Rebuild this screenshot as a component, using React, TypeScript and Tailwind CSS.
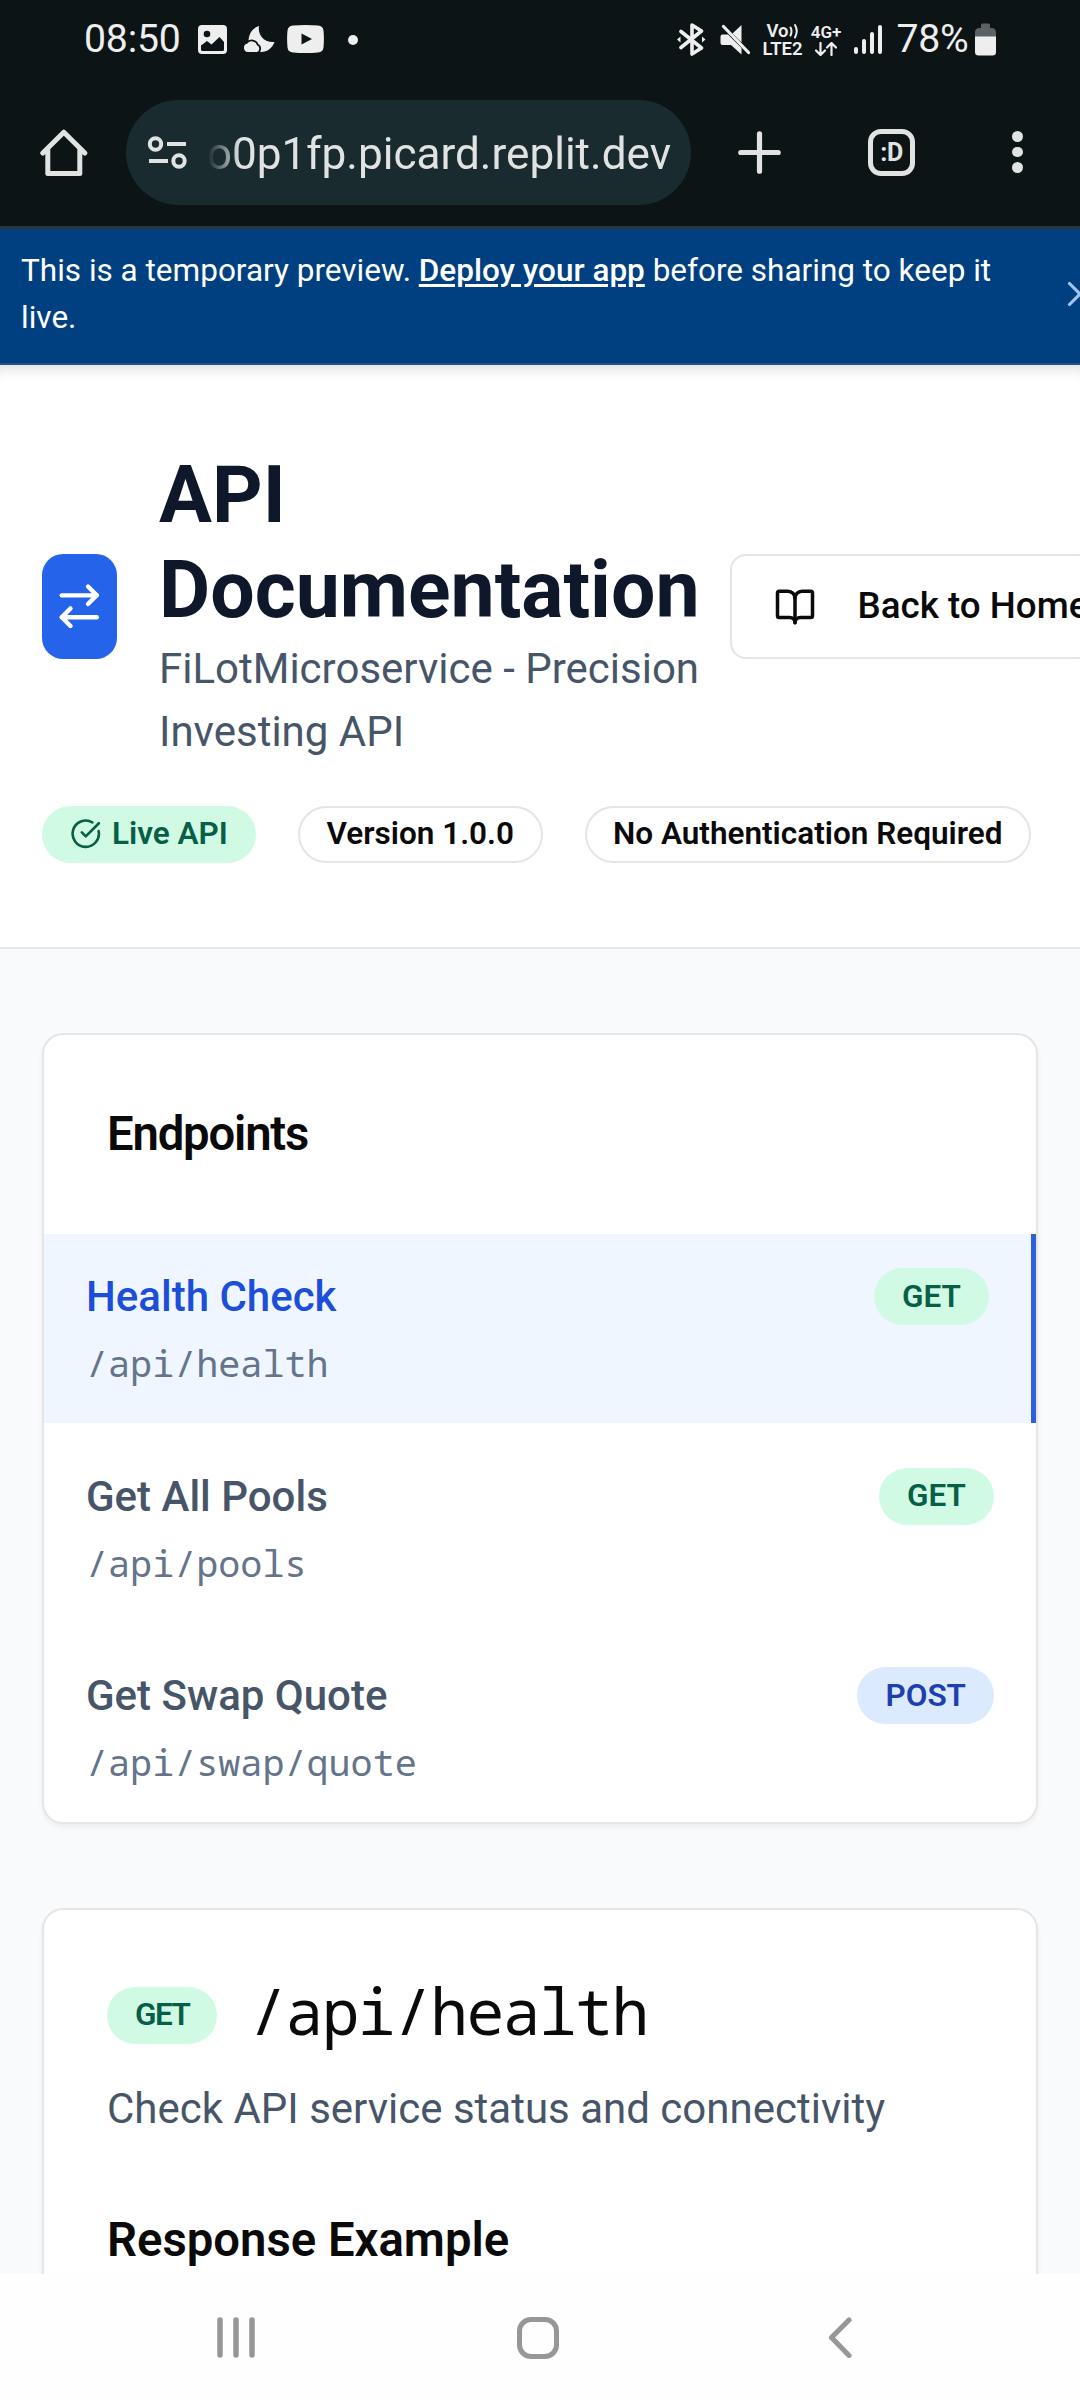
import { ArrowRightLeft, BookOpen, CircleCheckBig, X } from "lucide-react";

type Method = "GET" | "POST";

const endpoints: { name: string; path: string; method: Method; active?: boolean }[] = [
  { name: "Health Check", path: "/api/health", method: "GET", active: true },
  { name: "Get All Pools", path: "/api/pools", method: "GET" },
  { name: "Get Swap Quote", path: "/api/swap/quote", method: "POST" },
];

function StatusBar() {
  return (
    <div className="flex h-[78px] items-center pl-[84px] text-[#eeeeee]">
      <span className="mt-[1px] w-[114px] text-[39.2px] leading-none tracking-[-0.2px]">08:50</span>
      {/* picture notification */}
      <svg className="h-[29px] w-[29px]" viewBox="0 0 29 29">
        <rect width="29" height="29" rx="4" fill="#eee" />
        <circle cx="9" cy="9" r="3.3" fill="#0c1416" />
        <path d="M3 20.5 9 16l4.500 3.500L21.500 12l4.500 5v7.500q0 1.500-1.500 1.500h-20Q3 26 3 24.500Z" fill="#0c1416" />
      </svg>
      {/* moon behind a cloud */}
      <svg className="ml-[17px] h-[28px] w-[31px]" viewBox="0 0 31 28">
        <path d="M15 1C13.500 10 20 18 30.500 17 28 23.500 23 27.500 16 27L4.500 17C4.500 9 8.500 3 15 1Z" fill="#eee" />
        <path d="M4 27a4.300 4.300 0 0 1-.6-8.500 5.500 5.500 0 0 1 9.600 1.800A3.600 3.600 0 0 1 13 27Z" fill="#eee" stroke="#0c1416" strokeWidth="3.600" />
        <path d="M4 27a4.300 4.300 0 0 1-.6-8.500 5.500 5.500 0 0 1 9.600 1.800A3.600 3.600 0 0 1 13 27Z" fill="#eee" />
      </svg>
      <svg className="ml-[12px] h-[28px] w-[37px]" viewBox="0 0 37 28">
        <path d="M6 .6q12.500-1 25 0 5 .4 5.500 5 .8 8.400 0 16.800-.5 4.600-5.500 5-12.500 1-25 0-5-.4-5.500-5-.8-8.400 0-16.800Q1 1 6 .6Z" fill="#eee" />
        <path d="M14.500 8.500v11L25 14Z" fill="#0c1416" />
      </svg>
      <span className="ml-[24px] mt-[2px] h-[10px] w-[10px] rounded-full bg-[#eeeeee]" />

      <svg className="ml-[319px] h-[33px] w-[29px]" viewBox="0 0 29 33" fill="none" stroke="#eee">
        <path d="M4 8.500 24.500 25 15 31V2l9.500 6L4 24.500" strokeWidth="3.600" strokeLinecap="round" strokeLinejoin="round" />
        <path d="M0 16.500 3.500 13.500v6ZM28.500 16.500 25 13.500v6Z" fill="#eee" stroke="none" />
      </svg>
      <svg className="ml-[14px] h-[31px] w-[30px]" viewBox="0 0 30 31">
        <path d="M12.500 9.500 21.500 1v17.500Z" fill="#eee" />
        <path d="M2.500 10.500H8L21.500 24v6.500L11 21H2.500q-2 0-2-2v-6.500q0-2 2-2Z" fill="#eee" />
        <path d="m3.500 2.500 25 26" stroke="#eee" strokeWidth="3.200" strokeLinecap="round" />
      </svg>
      <span className="ml-[12px] mt-[2px] flex w-[41px] flex-col items-center text-[18.500px] font-semibold leading-[18px]">
        <span className="flex items-center">
          Vo
          <svg className="h-[16px] w-[10px]" viewBox="0 0 10 16" fill="none" stroke="#eee" strokeWidth="2" strokeLinecap="round">
            <path d="M1.500 4.500q2 3.500 0 8M6 2q3.500 6 0 12.500" />
          </svg>
        </span>
        <span>LTE2</span>
      </span>
      <span className="ml-[7px] mt-[2px] flex w-[32px] flex-col items-center text-[17px] font-semibold leading-[15px]">
        <span>4G+</span>
        <svg className="mt-[2px] h-[14px] w-[22px]" viewBox="0 0 22 14" fill="none" stroke="#eee" strokeWidth="2.200" strokeLinecap="round" strokeLinejoin="round">
          <path d="M5.500 1v12M1 8.500 5.500 13 10 8.500M16.500 13V1M12 5.500 16.500 1 21 5.500" />
        </svg>
      </span>
      <span className="ml-[12px] flex h-[30px] items-end gap-[4.500px]">
        <span className="h-[7px] w-[3.500px] rounded-full bg-[#eeeeee]" />
        <span className="h-[15px] w-[3.500px] rounded-full bg-[#eeeeee]" />
        <span className="h-[22px] w-[3.500px] rounded-full bg-[#eeeeee]" />
        <span className="h-[29px] w-[3.500px] rounded-full bg-[#eeeeee]" />
      </span>
      <span className="ml-[15px] mt-[1px] w-[78px] text-[39.200px] leading-none tracking-[-0.3px]">78%</span>
      <svg className="mt-[1px] h-[33px] w-[21px]" viewBox="0 0 21 33">
        <path d="M6 5V2q0-1.500 1.500-1.500h6Q15 .5 15 2v3h1.500Q21 5 21 9.500V14H0V9.500Q0 5 4.500 5Z" fill="#5c6163" />
        <path d="M0 13.500h21v15.500q0 3.500-3.500 3.500h-14Q0 32.500 0 29Z" fill="#eee" />
      </svg>
    </div>
  );
}

function BrowserToolbar() {
  return (
    <div className="flex h-[148px] items-center pl-[40px] text-[#e1e3e3]">
      <svg className="h-[49px] w-[48px]" viewBox="0 0 48 49" fill="none" stroke="#e1e3e3" strokeWidth="5" strokeLinecap="round" strokeLinejoin="round">
        <path d="M2.800 25 23.800 4.200 44.800 25M7.800 22v23.500h32V22" />
      </svg>
      <div className="ml-[38px] flex h-[105px] w-[565px] items-center rounded-full bg-[#1a2b2f] pl-[21px] pr-[20px]">
        <svg className="h-[35px] w-[41px] shrink-0" viewBox="0 0 41 35" fill="none" stroke="#e1e3e3" strokeWidth="4">
          <circle cx="8.500" cy="9" r="5.700" />
          <circle cx="32" cy="26" r="5.700" />
          <path d="M20 9h19M2 26h19" />
        </svg>
        <div className="ml-[20px] flex min-w-0 flex-1 justify-end overflow-hidden whitespace-nowrap pt-[4px] text-[44.100px] leading-[56px] [mask-image:linear-gradient(to_right,transparent,black_32px)]">
          o0p1fp.picard.replit.dev
        </div>
      </div>
      <svg className="ml-[47px] h-[43px] w-[43px]" viewBox="0 0 43 43" stroke="#e1e3e3" strokeWidth="5.200" strokeLinecap="round">
        <path d="M21.500 2.800v37.400M2.800 21.500h37.400" />
      </svg>
      <div className="ml-[87px] flex h-[47px] w-[47px] items-center justify-center rounded-[13px] border-[5px] border-[#e1e3e3] text-[25px] font-bold leading-none tracking-[-0.5px]">
        :D
      </div>
      <div className="ml-[97px] flex flex-col gap-[5px]">
        <span className="h-[10.700px] w-[10.700px] rounded-full bg-[#e1e3e3]" />
        <span className="h-[10.700px] w-[10.700px] rounded-full bg-[#e1e3e3]" />
        <span className="h-[10.700px] w-[10.700px] rounded-full bg-[#e1e3e3]" />
      </div>
    </div>
  );
}

function PreviewBanner() {
  return (
    <div className="flex h-[139px] items-center overflow-hidden border-b-2 border-t-[3px] border-b-[#25508a] border-t-[#2b383b] bg-[#004080] pl-[21px] text-white">
      <p className="mt-[-4px] w-[1030px] shrink-0 text-[31.500px] leading-[47px]">
        This is a temporary preview.{" "}
        <a className="font-medium underline decoration-[3px] underline-offset-[3px]">Deploy your app</a> before
        sharing to keep it live.
      </p>
      <X className="mb-[5px] ml-[8px] h-[42px] w-[42px] shrink-0 text-[#a3c4ee]" strokeWidth={1.8} />
    </div>
  );
}

function MethodBadge({ method }: { method: Method }) {
  const color = method === "GET" ? "bg-[#d1fae5] text-[#065f46]" : "bg-[#dbeafe] text-[#1e40af]";
  return (
    <span className={`flex h-[57px] items-center rounded-full px-[28px] text-[31.500px] font-semibold leading-[42px] ${color}`}>
      {method}
    </span>
  );
}

function PageHeader() {
  return (
    <header className="h-[584px] overflow-hidden border-b-2 border-[#e2e8f0] bg-white px-[42px] pt-[83px] shadow-[inset_0_14px_14px_-10px_rgba(0,0,0,0.13)]">
      <div className="flex items-center">
        <div className="mt-[2px] flex h-[105px] w-[75px] shrink-0 items-center justify-center rounded-[21px] bg-[#2563eb]">
          <ArrowRightLeft className="h-[52.500px] w-[52.500px] shrink-0 text-white" strokeWidth={2} />
        </div>
        <div className="ml-[42px] w-[541px] shrink-0">
          <h1 className="text-[78.750px] font-bold leading-[94.500px] text-[#0f172a]">API Documentation</h1>
          <p className="text-[42px] leading-[63px] text-[#475569]">FiLotMicroservice - Precision Investing API</p>
        </div>
        <button className="ml-[30px] mt-[2px] flex h-[105px] shrink-0 items-center gap-[41.500px] rounded-[16px] border-2 border-[#e5e5e5] bg-white px-[42px] text-[36.750px] font-medium leading-[52.500px] text-[#0a0a0a]">
          <BookOpen className="h-[42px] w-[42px]" />
          <span className="whitespace-nowrap">Back to Home</span>
        </button>
      </div>
      <div className="mt-[43px] flex gap-[42px] whitespace-nowrap text-[31.500px] font-semibold leading-[42px] text-[#0a0a0a]">
        <span className="flex h-[57px] items-center rounded-full bg-[#d1fae5] px-[28px] pb-[1px] text-[#065f46]">
          <CircleCheckBig className="mr-[10.500px] h-[31.500px] w-[31.500px]" />
          Live API
        </span>
        <span className="flex h-[57px] items-center rounded-full border-2 border-[#e5e5e5] px-[26.600px] pb-[1px]">
          Version 1.0.0
        </span>
        <span className="flex h-[57px] items-center rounded-full border-2 border-[#e5e5e5] px-[26.300px] pb-[1px]">
          No Authentication Required
        </span>
      </div>
    </header>
  );
}

function EndpointsCard() {
  return (
    <section className="overflow-hidden rounded-[21px] border-2 border-[#e5e5e5] bg-white shadow-[0_3px_5px_rgba(0,0,0,0.05)]">
      <h2 className="p-[63px] text-[47.250px] font-semibold leading-[73px] tracking-[-1.180px] text-[#0a0a0a]">Endpoints</h2>
      <div className="flex flex-col gap-[10.500px]">
        {endpoints.map((e) => (
          <div
            key={e.path}
            className={
              e.active
                ? "h-[189px] border-r-[5px] border-[#2b62dc] bg-[#eff6ff] px-[42px] pt-[31px] text-[#1d4ed8]"
                : "h-[189px] px-[42px] pt-[31px] text-[#475569]"
            }
          >
            <div className="flex h-[63px] items-center justify-between">
              <span className="text-[42px] font-medium leading-[63px]">{e.name}</span>
              <MethodBadge method={e.method} />
            </div>
            <div className="pt-[9px] font-['Noto_Sans_Mono',monospace] text-[36.750px] leading-[52.500px] text-[#64748b]">
              {e.path}
            </div>
          </div>
        ))}
      </div>
    </section>
  );
}

function EndpointDetailCard() {
  return (
    <section className="h-[500px] rounded-[21px] border-2 border-[#e5e5e5] bg-white px-[63px] pt-[63px] text-[#0a0a0a] shadow-[0_3px_5px_rgba(0,0,0,0.05)]">
      <div className="flex h-[84px] items-center tracking-[-1.575px]">
        <MethodBadge method="GET" />
        <span className="mb-[8px] ml-[32px] font-['Noto_Sans_Mono',monospace] text-[63px] leading-[84px]">/api/health</span>
      </div>
      <p className="mt-[20px] text-[42px] leading-[63px] text-[#475569]">Check API service status and connectivity</p>
      <h3 className="mt-[64px] text-[47.250px] font-semibold leading-[73.500px]">Response Example</h3>
    </section>
  );
}

function NavigationBar() {
  return (
    <nav className="flex h-[126px] shrink-0 items-center bg-[#fefefe] pl-[217px]">
      <svg className="h-[42px] w-[38px]" viewBox="0 0 38 42" stroke="#979797" strokeWidth="5.500" strokeLinecap="round">
        <path d="M3 4v35M19 4v35M35 4v35" />
      </svg>
      <span className="ml-[262px] mt-[2px] h-[42px] w-[42px] rounded-[14px] border-[5px] border-[#979797]" />
      <svg className="ml-[269px] h-[42px] w-[25px]" viewBox="0 0 25 42" fill="none" stroke="#979797" strokeWidth="5.200" strokeLinecap="round" strokeLinejoin="round">
        <path d="M21 4 3.500 21.500 21 39.500" />
      </svg>
    </nav>
  );
}

export default function App() {
  return (
    <div className="flex h-[2400px] w-[1080px] flex-col overflow-hidden bg-white font-[Roboto,sans-serif]">
      <div className="shrink-0 bg-[#0c1416]">
        <StatusBar />
        <BrowserToolbar />
      </div>
      <PreviewBanner />
      <main className="min-h-0 flex-1 overflow-hidden bg-[#f8fafc]">
        <PageHeader />
        <div className="flex flex-col gap-[84px] px-[42px] pt-[84px]">
          <EndpointsCard />
          <EndpointDetailCard />
        </div>
      </main>
      <NavigationBar />
    </div>
  );
}
